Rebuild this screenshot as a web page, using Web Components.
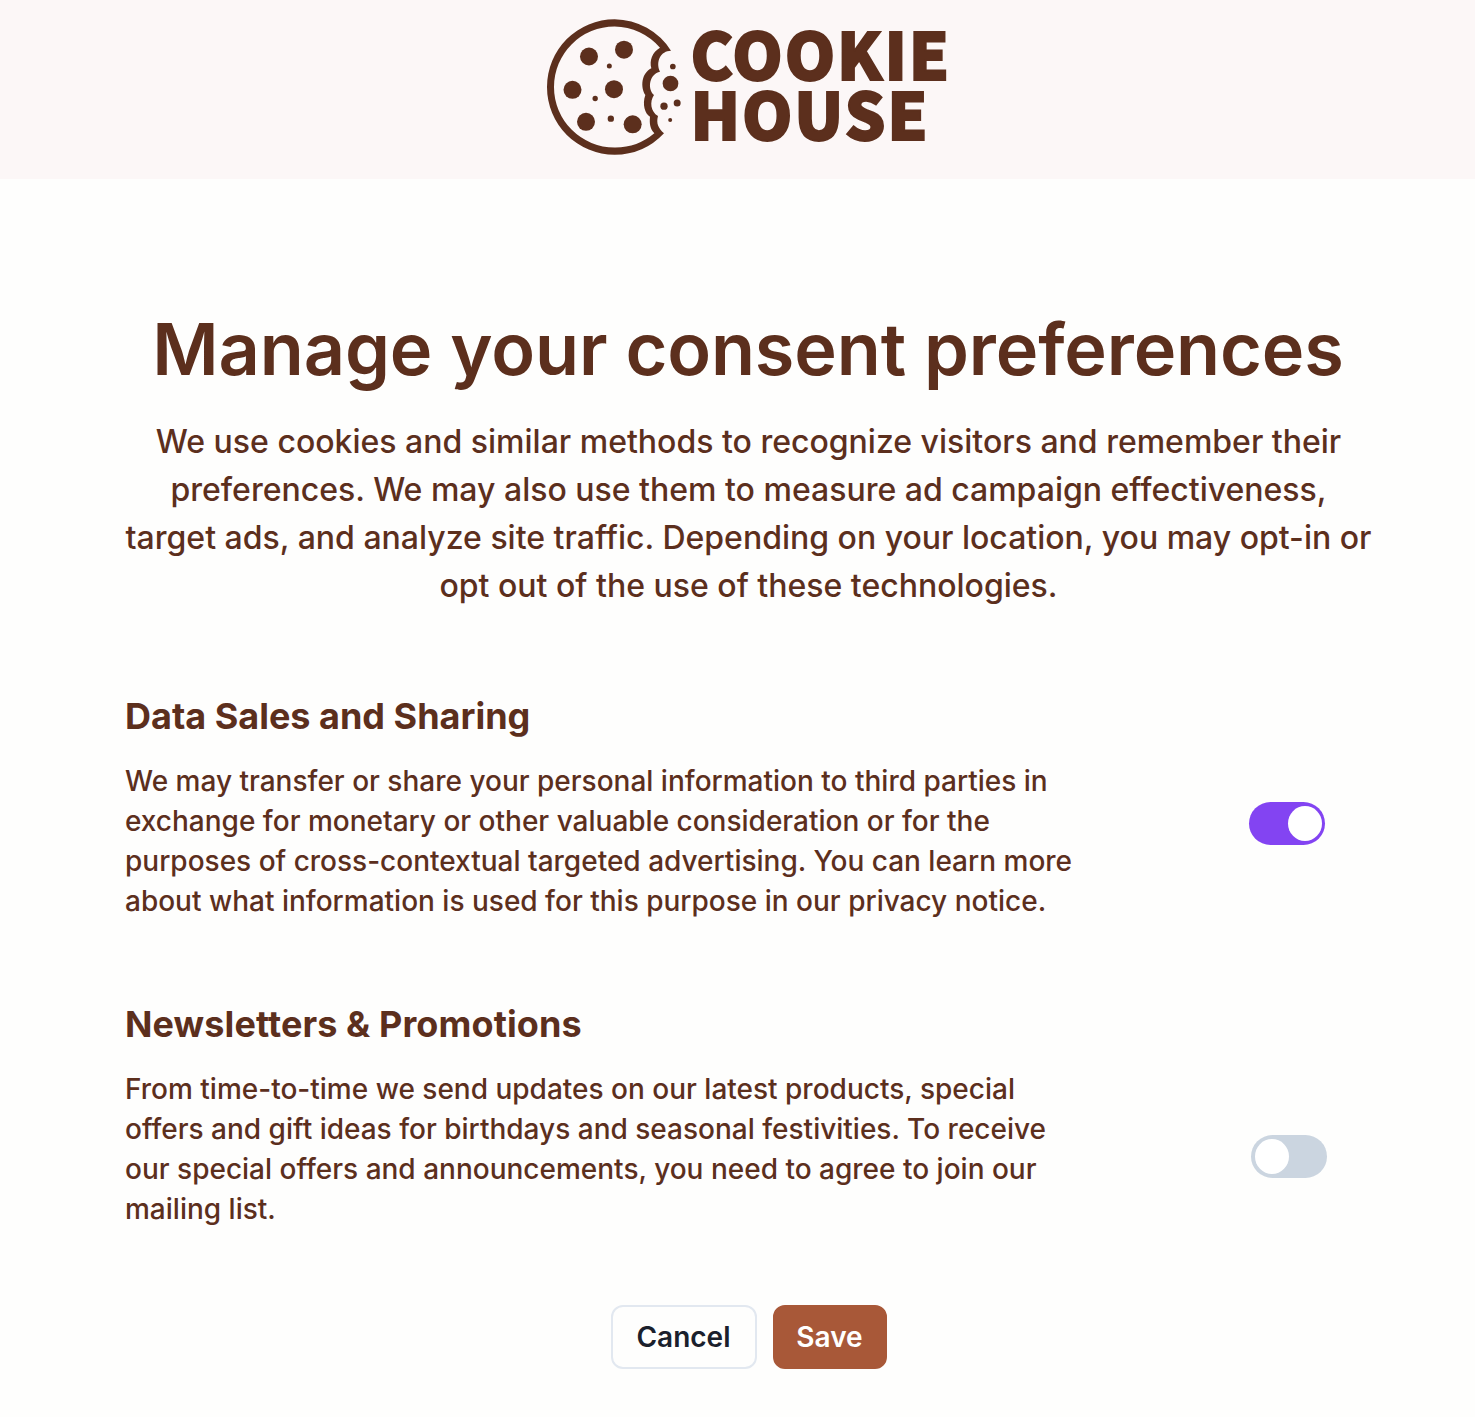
<!DOCTYPE html>
<html lang="en">
<head>
<meta charset="utf-8">
<title>Cookie House – Consent preferences</title>
<style>
  html, body { margin: 0; background: #fefefd; }
  body { font-family: Inter, "Liberation Sans", sans-serif; color: #5c2f1d; }
</style>
</head>
<body>
<consent-page></consent-page>
<script>
const define = (name, html) => {
  const template = document.createElement('template');
  template.innerHTML = html;
  customElements.define(name, class extends HTMLElement {
    constructor() {
      super();
      this.attachShadow({ mode: 'open' }).append(template.content.cloneNode(true));
    }
  });
};

define('cookie-logo', `
<style>
  :host { display: block; width: 420px; height: 155px; }
  svg { display: block; overflow: visible; }
  text { font-family: "Noto Sans CJK SC", "Noto Sans", sans-serif; font-weight: 900; font-size: 64.2px; letter-spacing: 1.9px; stroke: #5c2f1d; stroke-width: 1.8px; }
</style>
<svg width="420" height="155" viewBox="0 0 420 155" fill="#5c2f1d" role="img" aria-label="Cookie House">
  <g transform="scale(.33333)">
    <path fill-rule="evenodd" d="M393 122A203.500 203.500 0 0 0 224 27.500A203.500 203.500 0 0 0 21 231A203.500 203.500 0 0 0 224 434.500A203.500 203.500 0 0 0 372 370C355 355 348 340 354 318C332 305 328 275 342 255C320 235 330 190 360 185C346 155 362 122 393 122ZM360 113C336 127 328 152 334 175C304 190 301 232 316 255C306 283 315 312 330 320C328 340 330 355 343 370A181.500 181.500 0 0 1 224 412.500A181.500 181.500 0 0 1 42 231A181.500 181.500 0 0 1 224 49.500A181.500 181.500 0 0 1 360 113Z"/>
    <circle cx="147" cy="139.500" r="27"/><circle cx="252" cy="119" r="27"/>
    <circle cx="97.500" cy="239.500" r="27"/><circle cx="222" cy="237.500" r="27"/>
    <circle cx="138" cy="335.500" r="27"/><circle cx="278" cy="343" r="27"/>
    <circle cx="208" cy="168" r="7.500"/><circle cx="165.500" cy="265.500" r="8"/><circle cx="212.500" cy="326" r="9.500"/>
    <circle cx="398.500" cy="169.500" r="8.500"/><circle cx="391.500" cy="220.500" r="23.500"/>
    <circle cx="372" cy="288.500" r="11"/><circle cx="411.500" cy="279" r="10.500"/><circle cx="390.500" cy="330" r="6"/>
  </g>
  <text x="150.400" y="70.400">COOKIE</text>
  <text x="150.400" y="130.400">HOUSE</text>
</svg>`);

define('site-header', `
<style>
  :host { display: flex; justify-content: center; height: 179px; box-sizing: border-box; padding: 10px 0 0 25px; background: #fcf7f7; }
</style>
<slot></slot>`);

define('page-intro', `
<style>
  :host { display: block; text-align: center; white-space: nowrap; }
  h1 { margin: 0 1px 0 0; font-size: 72px; line-height: 90px; font-weight: 600; letter-spacing: -.12px; }
  p { margin: 24px 0 0; font-size: 32px; line-height: 48px; font-weight: 500; }
</style>
<h1><slot name="title"></slot></h1>
<p><slot></slot></p>`);

define('toggle-switch', `
<style>
  :host { display: flex; box-sizing: border-box; width: 76px; height: 42.500px; padding: 3.500px; border-radius: 22px; background: #cbd5e0; }
  :host([checked]) { justify-content: flex-end; background: #8344f2; }
  span { width: 34px; height: 35px; border-radius: 50%; background: #fff; }
</style>
<span></span>`);

define('consent-option', `
<style>
  :host { display: flex; justify-content: space-between; align-items: center; }
  .copy { white-space: nowrap; }
  h2 { margin: 0; font-size: 36px; line-height: 48px; font-weight: 700; letter-spacing: var(--heading-tracking, 0); }
  p { margin: 21px 0 0; font-size: 28px; line-height: 40px; font-weight: 500; }
</style>
<div class="copy"><h2><slot name="title"></slot></h2><p><slot></slot></p></div>
<slot name="control"></slot>`);

define('action-button', `
<style>
  :host { display: block; }
  button { display: block; box-sizing: border-box; width: var(--w); height: 64px; padding: 0; font: 600 28px/60px Inter, sans-serif; border: 2px solid #e2e8f0; border-radius: 12px; background: transparent; color: #1a202c; }
  :host([primary]) button { border-color: #a85838; background: #a85838; color: #fff; }
</style>
<button type="button"><slot></slot></button>`);

define('consent-page', `
<style>
  :host { display: block; height: 1417px; overflow: hidden; }
  main { display: flex; flex-direction: column; padding: 125px 103px 0 125px; }
  .options { display: flex; flex-direction: column; gap: 79px; margin-top: 82px; }
  .actions { display: flex; justify-content: center; gap: 16px; margin-top: 76px; }
  .on { margin: 34px 47px 0 0; }
  .off { margin: 84px 45px 0 0; }
</style>
<site-header><cookie-logo></cookie-logo></site-header>
<main>
  <page-intro>
    <span slot="title">Manage your consent preferences</span>
    We use cookies and similar methods to recognize visitors and remember their<br>preferences. We may also use them to measure ad campaign effectiveness,<br>target ads, and analyze site traffic. Depending on your location, you may opt-in or<br>opt out of the use of these technologies.
  </page-intro>
  <div class="options">
    <consent-option>
      <span slot="title">Data Sales and Sharing</span>
      We may transfer or share your personal information to third parties in<br>exchange for monetary or other valuable consideration or for the<br>purposes of cross-contextual targeted advertising. You can learn more<br>about what information is used for this purpose in our privacy notice.
      <toggle-switch slot="control" class="on" checked></toggle-switch>
    </consent-option>
    <consent-option style="--heading-tracking:.1px">
      <span slot="title">Newsletters &amp; Promotions</span>
      From time-to-time we send updates on our latest products, special<br>offers and gift ideas for birthdays and seasonal festivities. To receive<br>our special offers and announcements, you need to agree to join our<br>mailing list.
      <toggle-switch slot="control" class="off"></toggle-switch>
    </consent-option>
  </div>
  <div class="actions">
    <action-button style="--w:146px">Cancel</action-button>
    <action-button primary style="--w:114px">Save</action-button>
  </div>
</main>`);
</script>
</body>
</html>
